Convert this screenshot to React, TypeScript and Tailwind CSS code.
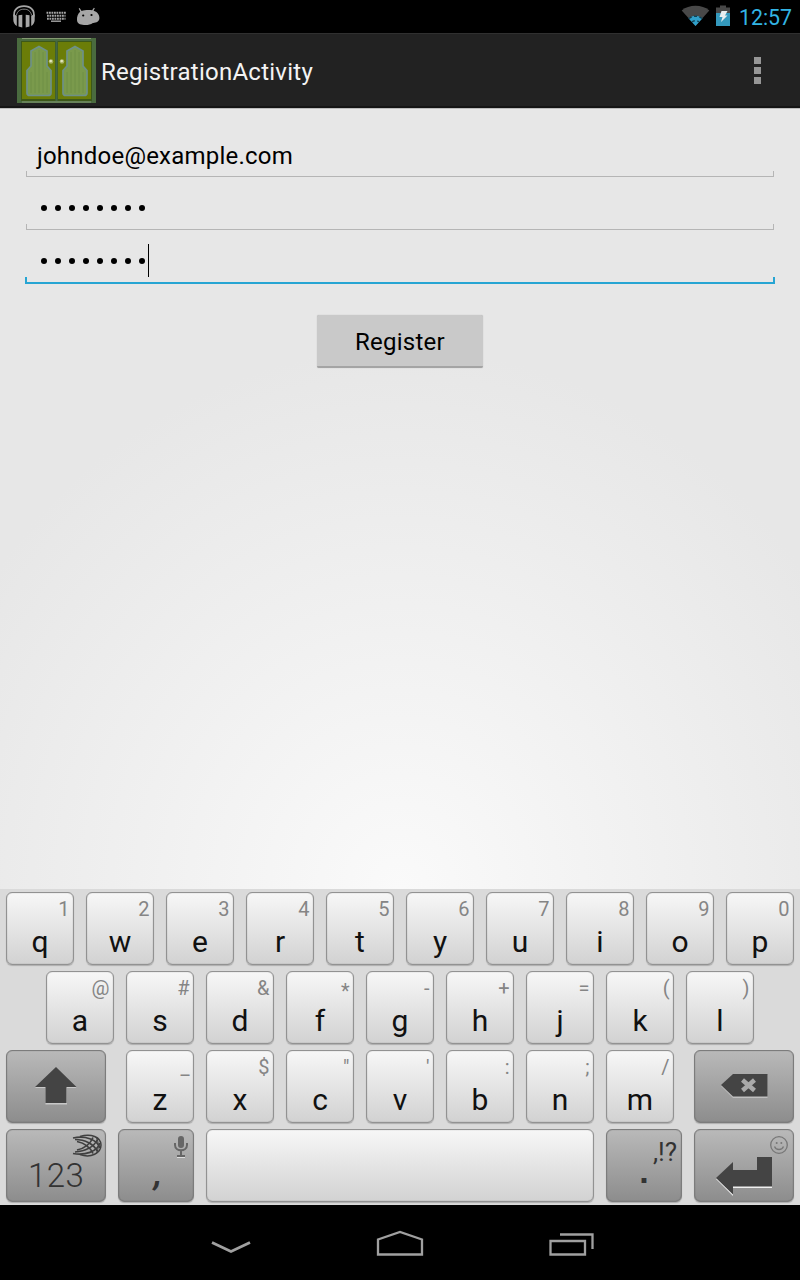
import React from 'react';

const LIGHT = 'bg-linear-to-b from-[#f7f7f7] to-[#d2d2d2] border-[#929292]';
const DARK = 'bg-linear-to-b from-[#b9b9b9] to-[#8d8d8d] border-[#7c7c7c]';
const KEY =
  'h-[73px] shrink-0 rounded-[6px] border shadow-[0_1px_1px_rgba(0,0,0,0.2),inset_0_0_1px_rgba(0,0,0,0.45)]';

function LetterKey({ letter, hint }: { letter: string; hint: string }) {
  return (
    <div className={`${KEY} ${LIGHT} flex w-[68px] flex-col`}>
      <span
        className={`mt-[6px] mr-[3.500px] self-end text-[20px] leading-[20px] text-[#858585] ${hint === '*' ? 'translate-y-[3px]' : ''}`}
      >
        {hint}
      </span>
      <span className="mt-[8px] self-center text-[30px] leading-[30px] text-[#111]">{letter}</span>
    </div>
  );
}

function Letters({ letters, hints }: { letters: string; hints: string }) {
  return (
    <>
      {letters.split('').map((letter, i) => (
        <LetterKey key={letter} letter={letter} hint={hints[i]} />
      ))}
    </>
  );
}

function StatusBar() {
  return (
    <div className="flex h-[33px] items-start bg-black">
      <svg className="h-[33px] w-[110px]" viewBox="0 0 110 33">
        <g fill="none" stroke="#a6a6a6">
          <path d="M14.600 17C12.500 10.500 17.500 6.200 24 6.200S35.500 10.500 33.400 17" strokeWidth="1.700" />
          <path d="M16.500 15C17.500 11 20 9.200 24 9.200S30.500 11 31.500 15" strokeWidth="0.800" />
        </g>
        <path d="M13.300 14.500l3.500 1v10.500c-2-1-3.500-3.500-3.500-6zM34.700 14.500l-3.500 1v10.500c2-1 3.500-3.500 3.500-6zM18.500 15.200l3.800-.5v12.800l-3.800-1zM29.500 15.200l-3.800-.5v12.800l3.800-1z" fill="#a6a6a6" />
        <g stroke="#a6a6a6" strokeWidth="1.900">
          <path d="M46.500 12.700H66" strokeDasharray="1.800 0.700" />
          <path d="M47 15.700H65.500" strokeDasharray="1.800 0.700" />
          <path d="M47 18.700H65.500" strokeDasharray="1.800 0.700" />
          <path d="M51 21.200H61" strokeWidth="1.400" />
        </g>
        <path
          d="M77 20c-.2-3.500 1-6.700 3.200-8.300l-1.500-3.200.9-.5 2 3c3-1.200 7.500-1.200 10.500-.8l1.800-2.500.9.500-1.200 2.600c3.500 1 5.900 3.900 5.800 7.200-.1 3.400-3 5-6.500 4.900-2.500 1.700-5.500 2.200-8.500 2C80 25 77.200 23.500 77 20z"
          fill="#a6a6a6"
        />
        <circle cx="83.200" cy="15.500" r="1.100" fill="#000" />
        <circle cx="91.500" cy="15" r="1.100" fill="#000" />
      </svg>
      <div className="flex-1" />
      <svg className="h-[33px] w-[56px]" viewBox="0 0 56 33">
        <path d="M1.700 10.500C9 4.300 22 4.300 29.300 10.500L15.500 26z" fill="#484848" />
        <path d="M8.500 18.200c4-3.400 10-3.400 14 0L15.500 26z" fill="#2f9fc9" />
        <path d="M9 18.500c4-3 9-3 13 0M12 22c2-1.700 5-1.700 7 0" fill="none" stroke="#123f50" strokeWidth="1.500" strokeDasharray="3 2.500" />
        <path d="M40 5.500h6v2h4V13H36V7.500h4z" fill="#484848" />
        <path d="M36 13h14v13H36z" fill="#3499bd" />
        <path d="M41.500 11h6l-2.500 4.500h2.500l-6.500 6.500 1.500-5h-3z" fill="#e8eef0" />
      </svg>
      <span className="mr-[9px] ml-[3px] w-[52px] text-right text-[21.300px] leading-[36px] whitespace-nowrap text-[#33b5e5]">12:57</span>
    </div>
  );
}

function DoorsLogo() {
  const panel = 'M22 8.500l8 4.500v15l4 4.500v22.500q0 2.500-3 2.500H13q-3 0-3-2.500V32.500l4-4.500V13z';
  return (
    <svg className="h-[65px] w-[79px]" viewBox="0 0 79 65">
      <path d="M0 0h79v65H0z" fill="#4a6b3f" />
      <path d="M5 .5h69M5 64h69" stroke="#849a72" />
      <path d="M4 3h71v60H4z" fill="#3d5818" />
      <path d="M5 4h33v57H5zM41 4h33v57H41z" fill="#6b7d08" />
      <path d="M39.500 3v60" stroke="#426646" strokeWidth="2" />
      <g fill="#7a9a4c" stroke="#6d9088" strokeWidth="1.700">
        <path d={panel} />
        <path d={panel} transform="translate(36 0)" />
      </g>
      <path
        d="M14 34v21M18 14v41M22 12v43M26 14v41M30 34v21M50 34v21M54 14v41M58 12v43M62 14v41M66 34v21"
        stroke="#6d8f45"
        strokeWidth="0.900"
      />
      <g>
        <circle cx="34" cy="23.500" r="2.300" fill="#a5b164" />
        <circle cx="45" cy="23.500" r="2.300" fill="#a5b164" />
        <circle cx="33.700" cy="23" r="1.300" fill="#e2e5bd" />
        <circle cx="44.700" cy="23" r="1.300" fill="#e2e5bd" />
      </g>
    </svg>
  );
}

function ActionBar() {
  return (
    <div className="flex h-[75px] items-start border-t border-b-2 border-t-[#303030] border-b-[#151515] bg-[#222]">
      <div className="mt-[4px] ml-[17px]">
        <DoorsLogo />
      </div>
      <h1 className="mt-[20px] ml-[5px] text-[24px] leading-[36px] tracking-[0.250px] text-[#f3f3f3]">RegistrationActivity</h1>
      <div className="mt-[23px] mr-[39px] ml-auto flex flex-col gap-[3px]">
        <i className="size-[7px] bg-[#969696]" />
        <i className="size-[7px] bg-[#969696]" />
        <i className="size-[7px] bg-[#969696]" />
      </div>
    </div>
  );
}

function FieldEdge({ focused }: { focused?: boolean }) {
  return focused ? (
    <div className="mx-[25px] h-[7px] border-2 border-t-0 border-[#27a5d3]" />
  ) : (
    <div className="mx-[26px] h-[6px] border border-t-0 border-[#b5b5b5]" />
  );
}

function Dots() {
  return (
    <div className="flex gap-[8px]">
      {Array.from({ length: 8 }, (_, i) => (
        <i key={i} className="size-[6px] rounded-full bg-black" />
      ))}
    </div>
  );
}

function Form() {
  return (
    <div className="flex h-[781px] flex-col bg-[radial-gradient(ellipse_500px_540px_at_50%_100%,#fafafa,#e7e7e7)] shadow-[inset_0_1px_0_#bdbdbd]">
      <div className="mt-[29px] h-[34px] pl-[37px] text-[24px] leading-[38px] tracking-[0.220px] text-black">johndoe@example.com</div>
      <FieldEdge />
      <div className="flex h-[47px] items-start pt-[28px] pl-[41px]">
        <Dots />
      </div>
      <FieldEdge />
      <div className="flex h-[47px] items-start pl-[41px]">
        <div className="mt-[28px]">
          <Dots />
        </div>
        <i className="mt-[14px] ml-[3px] h-[33px] w-px bg-black" />
      </div>
      <FieldEdge focused />
      <button className="mt-[31px] h-[53px] w-[166px] self-center rounded-[2px] border-b-2 border-b-[#a4a4a4] bg-[#c9c9c9] pt-[3px] text-[24px] leading-[48px] tracking-[0.250px] text-black shadow-[0_0_1px_#aaa]">
        Register
      </button>
    </div>
  );
}

function ShiftKey() {
  return (
    <div className={`${KEY} ${DARK} w-[100px]`}>
      <svg className="h-[71px] w-[98px]" viewBox="1 1 98 71">
        <path d="M50 18L70.500 38H61V54.500H39.500V38H29z" fill="#c8c8c8" />
        <path d="M50 17L70.500 37H60.500V53H39.500V37H29z" fill="#444" />
      </svg>
    </div>
  );
}

function DeleteKey() {
  return (
    <div className={`${KEY} ${DARK} w-[100px]`}>
      <svg className="h-[71px] w-[98px]" viewBox="1 1 98 71">
        <path d="M27 36l12-11h34.500v23H39z" fill="#c0c0c0" />
        <path d="M27 35l12-11h34.500v22.500H39z" fill="#444" />
        <path d="M48.500 30l12 10.500M60.500 30l-12 10.500" stroke="#aaa" strokeWidth="4.500" />
      </svg>
    </div>
  );
}

function NumbersKey() {
  return (
    <div className={`${KEY} ${DARK} relative w-[100px]`}>
      <span className="block pt-[27px] pl-[21px] text-[33px] leading-[38px] tracking-[0.400px] font-light text-[#333]">123</span>
      <svg className="absolute top-[4px] right-[2px] h-[24px] w-[32px]" viewBox="0 0 32 24" fill="none" stroke="#3f3f3f">
        <path d="M9 2.500C20-1 30 3 30 11S20 24.500 9 20.500" strokeWidth="1.500" />
        <path d="M2 4C14 1.500 26 5 29 14M2 19.500C14 21.500 26 18 29 9" strokeWidth="1.700" />
        <path d="M4 5.500C14 5.500 23 10 26.500 17.500M4 18C14 17.500 23 13 26.500 5.500" strokeWidth="1.700" />
        <path d="M6 7.500C13 9 19 13 22 19.500M6 16C13 14.500 19 10.500 22 3.500" strokeWidth="1.700" />
        <path d="M25 3C28 8 28 15 25 20" strokeWidth="1" />
      </svg>
    </div>
  );
}

function CommaKey() {
  return (
    <div className={`${KEY} ${DARK} relative w-[76px]`}>
      <svg className="absolute top-0 left-0 h-[71px] w-[74px]" viewBox="1 1 74 71">
        <path d="M59 28.500h8" stroke="#ddd" />
        <rect x="60" y="7" width="6" height="12" rx="3" fill="#666" />
        <path d="M57 14v2c0 7 12 7 12 0v-2M63 21.500v4.500M59 27h8" fill="none" stroke="#666" strokeWidth="2" />
      </svg>
      <span className="block pt-[25px] pl-[4px] text-center text-[34px] leading-[36px] font-bold text-[#333] italic">,</span>
    </div>
  );
}

function PeriodKey() {
  return (
    <div className={`${KEY} ${DARK} flex w-[76px] flex-col`}>
      <span className="mt-[8px] mr-[4px] self-end text-[26px] leading-[28px] text-[#333]">,!?</span>
      <span className="mt-[-10px] self-center font-['Liberation_Sans',sans-serif] text-[34px] leading-[30px] font-bold text-[#333]">.</span>
    </div>
  );
}

function EnterKey() {
  return (
    <div className={`${KEY} ${DARK} w-[100px]`}>
      <svg className="h-[71px] w-[98px]" viewBox="1 1 98 71">
        <path d="M22 50l17-16v8h24V29h15v30H39v8z" fill="#f0f0f0" />
        <path d="M22 49l17-16v8h24V28h15v29.500H39v8z" fill="#444" />
        <g fill="none" stroke="#777" strokeWidth="1.300">
          <circle cx="85" cy="16" r="8.300" />
          <path d="M80.500 17.500c1.500 4 7.500 4 9 0" />
        </g>
        <circle cx="82.700" cy="14" r="1" fill="#777" />
        <circle cx="87.300" cy="14" r="1" fill="#777" />
      </svg>
    </div>
  );
}

function Keyboard() {
  return (
    <div className="flex h-[316px] flex-col gap-[6px] bg-[#dadada] px-[6px] pt-[3px]">
      <div className="flex gap-[12px]">
        <Letters letters="qwertyuiop" hints="1234567890" />
      </div>
      <div className="flex justify-center gap-[12px]">
        <Letters letters="asdfghjkl" hints="@#&*-+=()" />
      </div>
      <div className="flex justify-between">
        <ShiftKey />
        <div className="flex gap-[12px]">
          <Letters letters="zxcvbnm" hints={'_$"\':;/'} />
        </div>
        <DeleteKey />
      </div>
      <div className="flex gap-[12px]">
        <NumbersKey />
        <CommaKey />
        <div className={`${KEY} ${LIGHT} w-[388px]`} />
        <PeriodKey />
        <EnterKey />
      </div>
    </div>
  );
}

function NavBar() {
  return (
    <div className="flex h-[75px] justify-center bg-black">
      <svg className="h-[75px] w-[420px]" viewBox="0 0 420 75" fill="none" stroke="#a0a0a0">
        <path d="M22 37.500L41 46.500L60 37.500" strokeWidth="2.800" />
        <path d="M188 49.500V34.500L210 27L232 34.500V49.500z" strokeWidth="2.300" />
        <path d="M360.500 36h34.500v13.500h-34.500zM370 29.500h32.500v14.500" strokeWidth="2.300" />
      </svg>
    </div>
  );
}

export default function App() {
  return (
    <div className="h-[1280px] w-[800px] overflow-hidden bg-black font-['Roboto',sans-serif]">
      <StatusBar />
      <ActionBar />
      <Form />
      <Keyboard />
      <NavBar />
    </div>
  );
}
